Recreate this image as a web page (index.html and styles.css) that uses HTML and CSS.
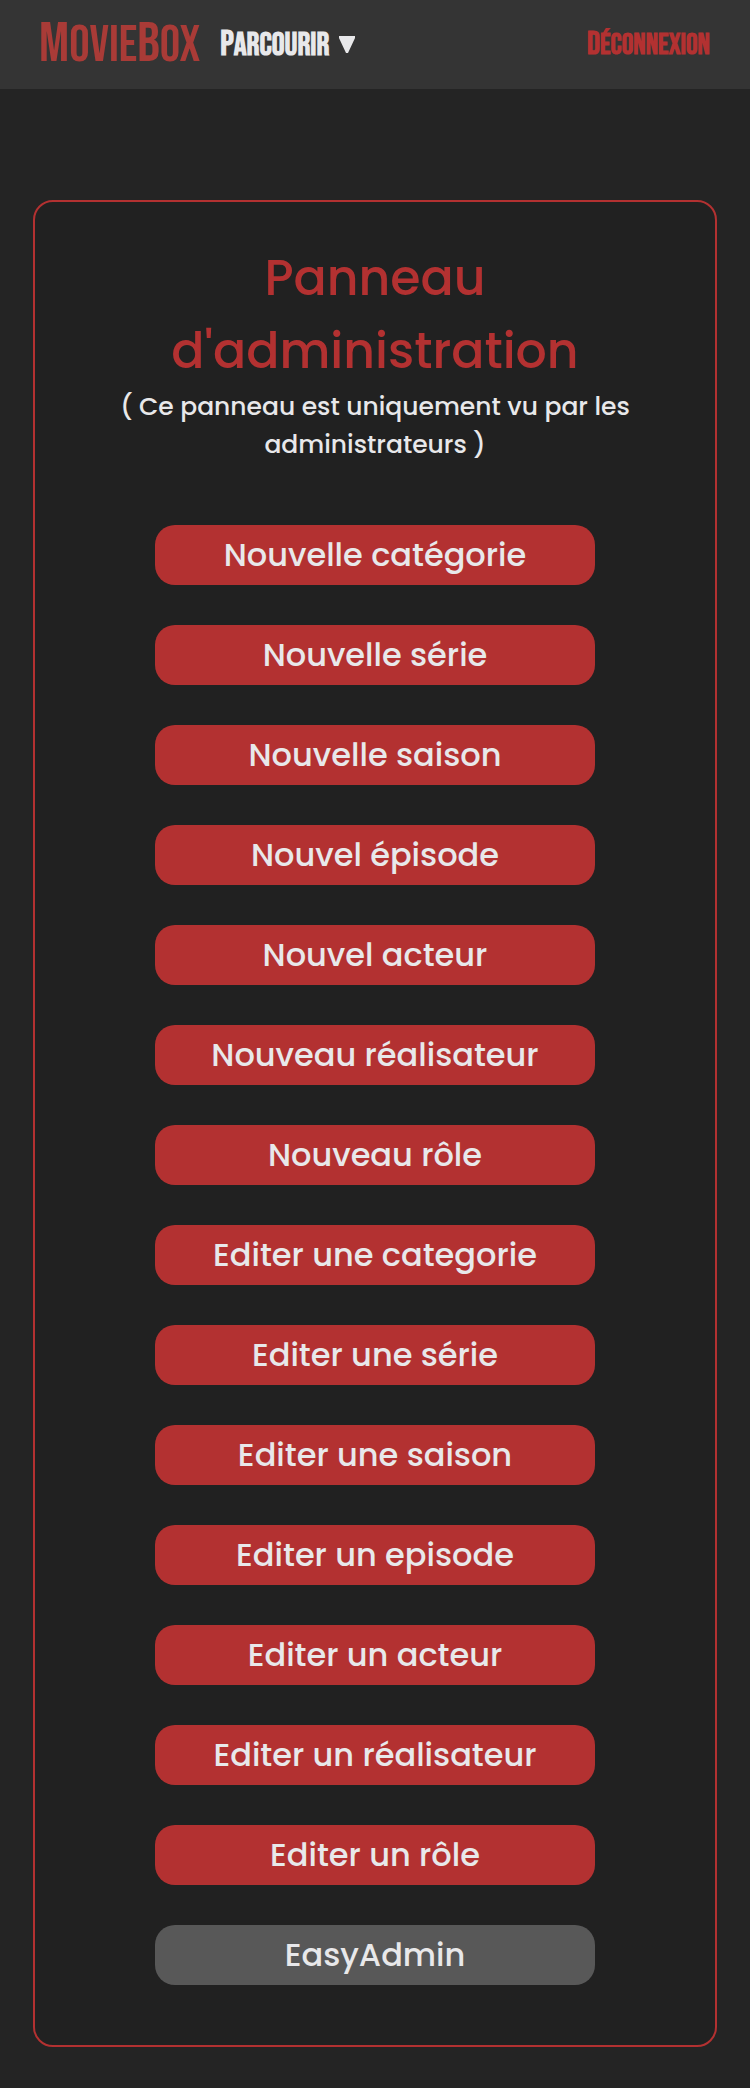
FILE: index.html
```
<!DOCTYPE html>
<html lang="fr">
<head>
<meta charset="utf-8">
<meta name="viewport" content="width=device-width, initial-scale=1">
<title>MovieBox</title>
<link rel="stylesheet" href="styles.css">
</head>
<body>
<header class="navbar">
  <a class="brand" href="#"><span class="cap">M</span>ovie<span class="cap">B</span>ox</a>
  <button class="browse" type="button"><span class="browse-label">Parcourir</span><svg class="caret" viewBox="0 0 16 17" aria-hidden="true"><path d="M0 0H16V2L9 17H7L0 2Z"/></svg></button>
  <a class="logout" href="#">Déconnexion</a>
</header>
<main class="panel">
  <h1 class="title">Panneau d'administration</h1>
  <p class="note">( Ce panneau est uniquement vu par les administrateurs )</p>
  <nav class="actions">
    <a class="action" href="#">Nouvelle catégorie</a>
    <a class="action" href="#">Nouvelle série</a>
    <a class="action" href="#">Nouvelle saison</a>
    <a class="action" href="#">Nouvel épisode</a>
    <a class="action" href="#">Nouvel acteur</a>
    <a class="action" href="#">Nouveau réalisateur</a>
    <a class="action" href="#">Nouveau rôle</a>
    <a class="action" href="#">Editer une categorie</a>
    <a class="action" href="#">Editer une série</a>
    <a class="action" href="#">Editer une saison</a>
    <a class="action" href="#">Editer un episode</a>
    <a class="action" href="#">Editer un acteur</a>
    <a class="action" href="#">Editer un réalisateur</a>
    <a class="action" href="#">Editer un rôle</a>
    <a class="action action-neutral" href="#">EasyAdmin</a>
  </nav>
</main>
</body>
</html>
```
FILE: styles.css
```
* { box-sizing: border-box; }

body {
  margin: 0;
  background: #242424;
  color: #e8e8ea;
  font-family: Poppins, Inter, "Open Sans", sans-serif;
  font-weight: 500;
}

a { color: inherit; text-decoration: none; }

.navbar {
  display: flex;
  align-items: center;
  height: 89px;
  padding: 0 40px 0 39px;
  background: #343434;
  font-family: "Bebas Neue", "Roboto Condensed", "Liberation Sans Narrow", Roboto, sans-serif;
  font-weight: 700;
  line-height: 1;
  text-transform: uppercase;
}

.brand { color: #a93b37; font-size: 51px; font-weight: 400; }
.brand .cap { font-size: 56px; }

.browse {
  display: flex;
  align-items: center;
  gap: 10px;
  margin-left: 20px;
  padding: 0;
  border: 0;
  background: none;
  color: inherit;
  font: inherit;
  font-size: 32px;
  text-transform: inherit;
}

.browse-label { display: block; }
.browse-label::first-letter { font-size: 35px; }
.caret { width: 16px; height: 17px; fill: currentColor; }
.logout { display: block; margin-left: auto; color: #b33131; font-size: 29px; }
.logout::first-letter { font-size: 32px; }

.panel {
  margin: 111px 33px 40px;
  padding: 40px 60px 60px;
  border: 2px solid #b33131;
  border-radius: 20px;
  background: #212121;
  text-align: center;
}

.title {
  max-width: 460px;
  margin: 0 auto;
  color: #b33131;
  font-size: 49px;
  font-weight: 500;
  line-height: 73px;
}

.note {
  max-width: 540px;
  margin: 0 auto;
  font-size: 25px;
  line-height: 38px;
}

.actions {
  display: grid;
  gap: 40px;
  max-width: 440px;
  margin: 61px auto 0;
}

.action {
  border-radius: 20px;
  background: #b33131;
  font-size: 32px;
  line-height: 60px;
}

.action-neutral { background: #585858; }
```
